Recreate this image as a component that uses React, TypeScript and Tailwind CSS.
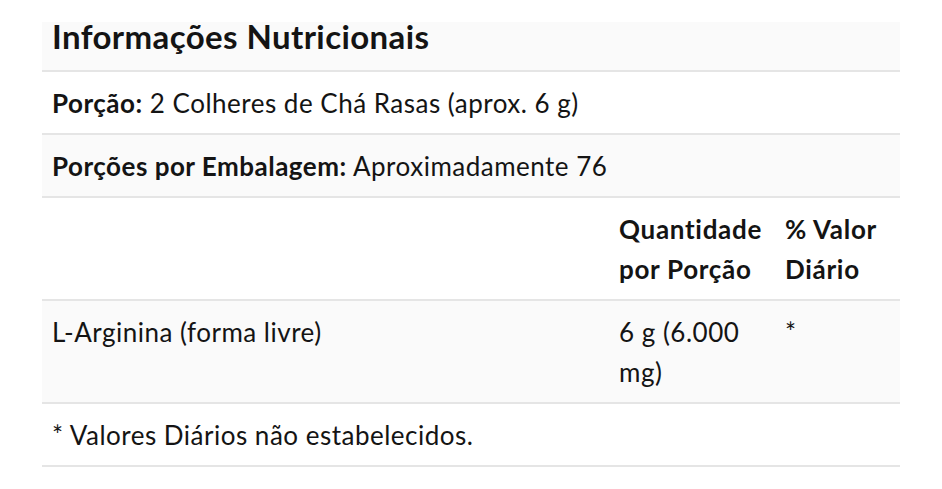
export default function App() {
  const border = "border-b-2 border-[#e5e5e5]";
  const cell = "px-[10px] pt-[11px] pb-[10px]";

  return (
    <div className="min-h-screen bg-white pt-[22px] pl-[42px] text-[#141414] font-['Lato',sans-serif]">
      <div className="w-[858px] text-[26px] leading-[40px] tracking-[0.5px]">
        <div className={`bg-[#fafafa] ${border} h-[50px] px-[10px]`}>
          <h2 className="text-[33px] font-bold leading-[28px] tracking-[0.4px]">Informações Nutricionais</h2>
        </div>
        <div className={`${border} ${cell}`}>
          <span className="font-bold">Porção:</span> 2 Colheres de Chá Rasas (aprox. 6 g)
        </div>
        <div className={`bg-[#fafafa] ${border} ${cell}`}>
          <span className="font-bold">Porções por Embalagem:</span> Aproximadamente 76
        </div>
        <div className={`flex ${border}`}>
          <div className={`w-[567px] ${cell}`}></div>
          <div className={`w-[166px] ${cell} font-bold tracking-[0.7px]`}>Quantidade por Porção</div>
          <div className={`w-[125px] ${cell} font-bold tracking-[0.7px]`}>% Valor Diário</div>
        </div>
        <div className={`flex bg-[#fafafa] ${border}`}>
          <div className={`w-[567px] ${cell}`}>L-Arginina (forma livre)</div>
          <div className={`w-[166px] ${cell}`}>6 g (6.000 mg)</div>
          <div className={`w-[125px] ${cell}`}>*</div>
        </div>
        <div className={`${border} ${cell}`}>* Valores Diários não estabelecidos.</div>
      </div>
    </div>
  );
}
